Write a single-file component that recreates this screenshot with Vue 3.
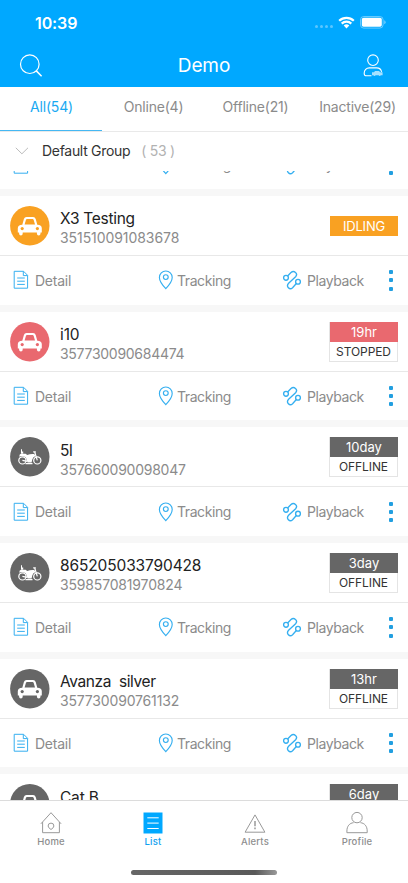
<script setup>
const tabs = [
  { label: 'All(54)', active: true },
  { label: 'Online(4)' },
  { label: 'Offline(21)' },
  { label: 'Inactive(29)' },
]

// nameGap / idGap: letter spacing in px for the two text lines
const vehicles = [
  { collapsed: true, id: 'previous' },
  { name: 'X3 Testing', id: '351510091083678', type: 'car', tone: 'orange', status: 'IDLING', nameGap: -0.3, idGap: -0.07 },
  { name: 'i10', id: '357730090684474', type: 'car', tone: 'red', status: 'STOPPED', time: '19hr', nameGap: -0.1, idGap: -0.28 },
  { name: '5l', id: '357660090098047', type: 'bike', tone: 'gray', status: 'OFFLINE', time: '10day', nameGap: -0.3, idGap: -0.25 },
  { name: '865205033790428', id: '359857081970824', type: 'bike', tone: 'gray', status: 'OFFLINE', time: '3day', nameGap: -0.13, idGap: -0.17 },
  { name: 'Avanza  silver', id: '357730090761132', type: 'car', tone: 'gray', status: 'OFFLINE', time: '13hr', nameGap: -0.4, idGap: -0.17 },
  { name: 'Cat B', id: '357730090761140', type: 'car', tone: 'gray', status: 'OFFLINE', time: '6day', nameGap: -0.2, idGap: -0.17 },
]
</script>

<template>
  <div class="screen">
    <header class="header">
      <div class="status-bar">
        <span class="clock">10:39</span>
        <div class="signals">
          <span class="dots"><i v-for="n in 4" :key="n"></i></span>
          <svg class="wifi" width="17" height="13" viewBox="0 0 17 13">
            <path d="M1.2 4.8a10.4 10.4 0 0 1 14.6 0M3.7 7.6a6.8 6.8 0 0 1 9.6 0" fill="none" stroke="#fff" stroke-width="2.2" />
            <path d="M8.5 12.4 5.7 9.6a4 4 0 0 1 5.6 0z" fill="#fff" />
          </svg>
          <svg class="battery" width="27" height="13" viewBox="0 0 27 13">
            <rect x=".5" y=".5" width="22.6" height="11.6" rx="3.3" fill="none" stroke="#fff" stroke-opacity=".4" />
            <rect x="1.8" y="1.8" width="20" height="9" rx="1.8" fill="#fff" />
            <path d="M24.3 4.3q1.3.6 1.3 2t-1.3 2z" fill="#fff" opacity=".5" />
          </svg>
        </div>
      </div>
      <div class="title-bar">
        <svg width="24" height="24" viewBox="0 0 24 24" fill="none" stroke="#fff" stroke-width="1.2">
          <circle cx="10.8" cy="10.2" r="9.3" />
          <path d="m17.3 16.9 5.3 5.3" stroke-width="1.5" />
        </svg>
        <h1>Demo</h1>
        <svg width="24" height="24" viewBox="0 0 24 24" fill="none" stroke="#fff" stroke-width="1.1">
          <circle cx="12" cy="6.2" r="5.3" />
          <path d="M10.5 21.8H5.6a2.4 2.4 0 0 1-2.4-2.4v-.5a5 5 0 0 1 5-5h7.5a5 5 0 0 1 4.9 4" />
          <path d="M11 18.2h2l1-1.2h4l1.2 1.2h2.4v3h-1.8a1.2 1.2 0 0 1-2.2 0h-3a1.2 1.2 0 0 1-2.2 0H11z" fill="#fff" fill-opacity=".65" stroke="none" />
        </svg>
      </div>
    </header>

    <nav class="tabs">
      <span v-for="t in tabs" :key="t.label" class="tab" :class="{ active: t.active }">{{ t.label }}</span>
    </nav>

    <div class="group">
      <svg width="14" height="8" viewBox="0 0 14 8"><path d="m.8.8 6.1 6L13 .8" fill="none" stroke="#bbb" /></svg>
      <span class="group-name">Default Group</span>
      <span class="group-count">( 53 )</span>
    </div>

    <main class="list">
      <article v-for="v in vehicles" :key="v.id" class="card" :class="{ collapsed: v.collapsed }">
        <div v-if="!v.collapsed" class="info">
          <svg class="avatar" :class="v.tone" width="40" height="40" viewBox="0 0 40 40">
            <circle cx="19.8" cy="19.8" r="19.7" fill="currentColor" />
            <template v-if="v.type === 'car'">
              <path d="M12.3 18.7 13.9 13q.7-2.1 2.6-2.1h6.6q1.9 0 2.6 2.1l1.6 5.7q4.5.3 4.5 3.5v4.2h-1.3v1.2q0 1.9-1.8 1.9t-1.8-1.9v-1.2H12.7v1.2q0 1.9-1.8 1.9t-1.8-1.9v-1.2H7.8v-4.2q0-3.2 4.5-3.5z" fill="#fff" />
              <path d="m14.6 18.4 1.3-4.4q.3-.9 1.1-.9h5.6q.8 0 1.1.9l1.3 4.4z" fill="currentColor" />
              <circle cx="12.2" cy="22.6" r="1.6" fill="currentColor" />
              <circle cx="27.4" cy="22.6" r="1.6" fill="currentColor" />
            </template>
            <template v-else>
              <g fill="none" stroke="#fff" stroke-width="1.2">
                <circle cx="12.4" cy="23.4" r="3.6" />
                <circle cx="27.3" cy="23.4" r="3.6" />
                <path d="m12.4 23.4 5 .9M23.2 14.8h2.6M24.7 15l2.6 8.4M15.5 26.6h7" />
              </g>
              <path d="M11 12.2h1v2.4h1.2v1.9H11zM11 16.8h4.6l1.6 1.2q3.6-1.5 7-1l1.3 2.1q-2.9 1-3.3 3.6l-.6 2.7h-4l-1.7-4.9q-1.8-1.8-4.5-1.6-1.2.1-2.2.8.2-2.8 1.8-2.9z" fill="#fff" />
            </template>
          </svg>
          <div class="labels">
            <span class="name" :style="{ letterSpacing: v.nameGap + 'px' }">{{ v.name }}</span>
            <span class="imei" :style="{ letterSpacing: v.idGap + 'px' }">{{ v.id }}</span>
          </div>
          <div class="badge" :class="[v.tone, { single: !v.time }]">
            <span class="badge-top">{{ v.time || v.status }}</span>
            <span v-if="v.time" class="badge-bottom">{{ v.status }}</span>
          </div>
        </div>
        <div v-if="v.name !== 'Cat B'" class="actions">
          <div class="action detail">
            <svg width="16" height="20" viewBox="0 0 16 20" fill="none" stroke="#35aff0">
              <path d="M1.2 1.3h9.4l4 4v12.9H1.2zM10.3 1.5v4.1h4.1" />
              <path d="M4.2 8h7.6M4.2 11.2h7.6M4.2 14.4h7.6" />
            </svg>
            <span>Detail</span>
          </div>
          <div class="action tracking">
            <svg width="16" height="20" viewBox="0 0 16 20" fill="none" stroke="#35aff0" stroke-width="1.15">
              <path d="M7.8 18.6Q1.4 11.8 1.4 7.4a6.4 6.4 0 0 1 12.8 0Q14.2 11.8 7.8 18.6z" />
              <circle cx="7.8" cy="7.1" r="2.4" />
            </svg>
            <span>Tracking</span>
          </div>
          <div class="action playback">
            <svg width="20" height="20" viewBox="0 0 20 20" fill="none" stroke="#35aff0" stroke-width="1.35">
              <circle cx="4" cy="7.8" r="2.4" />
              <circle cx="16" cy="11.7" r="2.4" />
              <path d="M5.6 6 9 2.6c3-2.7 7.4 1 4.6 4.2l-7 6.5c-2.9 3.2 1 7.2 4 4.4l3.7-4.2" />
            </svg>
            <span>Playback</span>
          </div>
          <div class="more"><i></i><i></i><i></i></div>
        </div>
      </article>
    </main>

    <footer class="bottom">
      <div class="nav">
        <div class="nav-item">
          <svg width="24" height="24" viewBox="0 0 24 24" fill="none" stroke="#999">
            <path d="M1.9 12.8 12 1.7l10.1 11.1M3.6 11v10.7h16.8V11" />
            <path d="M12 18.5q-2.9-1.8-2.9-3.5a2.9 2.9 0 0 1 5.8 0q0 1.7-2.9 3.5z" />
          </svg>
          <span>Home</span>
        </div>
        <div class="nav-item selected">
          <svg width="24" height="24" viewBox="0 0 24 24">
            <path d="M2.5 1.5h19v21h-19z" fill="#00a8ff" />
            <path d="M6.3 6.8h11.4M6.3 12.1h11.4M6.3 17.5h11.4" stroke="#fff" />
          </svg>
          <span>List</span>
        </div>
        <div class="nav-item">
          <svg width="24" height="24" viewBox="0 0 24 24" fill="none" stroke="#999">
            <path d="M12 3.9 21.9 21.2H2.1z" />
            <path d="M12 10v5.2M12 16.5v1.8" stroke-width="1.5" />
          </svg>
          <span>Alerts</span>
        </div>
        <div class="nav-item">
          <svg width="24" height="24" viewBox="0 0 24 24" fill="none" stroke="#999">
            <circle cx="12" cy="6.6" r="5.2" />
            <path d="M8.6 11.7C4.5 12 1.9 15.3 1.9 20v1.7h20.3V20c0-4.7-2.6-8-6.8-8.3" />
          </svg>
          <span>Profile</span>
        </div>
      </div>
      <div class="home-bar"></div>
    </footer>
  </div>
</template>

<style>
body { margin: 0; background: #fff; }
</style>

<style scoped>
* { box-sizing: border-box; }
svg { display: block; flex: none; }
.screen {
  width: 408px;
  height: 883px;
  display: flex;
  flex-direction: column;
  overflow: hidden;
  background: #fff;
  font-family: Inter, "Liberation Sans", sans-serif;
  color: #333;
}
.header { height: 87px; flex: none; background: #00a8ff; color: #fff; }
.status-bar { height: 44px; display: flex; justify-content: space-between; padding: 14px 21px 0 35px; }
.clock { font-size: 16px; line-height: 18px; font-weight: 600; letter-spacing: -.1px; }
.signals { display: flex; height: 17px; align-items: center; }
.dots { display: flex; gap: 2px; margin: 8px 5.5px 0 0; }
.dots i { width: 3px; height: 3px; border-radius: 50%; background: #5cc6ff; }
.battery { margin-left: 5px; }
.title-bar { height: 43px; display: flex; align-items: center; justify-content: space-between; padding: 0 23px 0 19px; }
h1 { margin: 0; font-size: 19px; line-height: 24px; font-weight: 400; letter-spacing: -.1px; padding-left: 4px; }
.tabs { height: 45px; flex: none; display: grid; grid-template-columns: repeat(4, 1fr); border-bottom: 1px solid #e9e9e9; }
.tab { height: 44px; padding: 0 0 5px 1px; display: flex; align-items: center; justify-content: center; font-size: 14px; letter-spacing: -.2px; color: #8b8b8b; white-space: nowrap; }
.tab.active { color: #19a9f2; border-bottom: 1px solid #45b8f3; padding-bottom: 4px; }
.group { height: 39px; flex: none; display: flex; align-items: center; padding: 0 0 2px 15px; font-size: 14px; letter-spacing: -.3px; }
.group-name { margin-left: 13px; }
.group-count { margin-left: 11px; color: #b2b2b2; letter-spacing: -.3px; }
.list { height: 629px; flex: none; overflow: hidden; background: #f7f7f7; }
.card { height: 108.7px; margin-bottom: 7px; background: #fff; }
.card.collapsed { height: 48.7px; margin-top: -30.7px; }
.info { height: 60px; display: flex; align-items: center; padding: 1px 10px 0; border-bottom: 1px solid #e8e8e8; }
.gray { color: #666; }
.orange { color: #f9a122; }
.red { color: #e9696f; }
.labels { display: flex; flex-direction: column; margin-left: 10px; padding-top: 4.4px; }
.name { font-size: 15.5px; line-height: 20px; color: #222; white-space: pre; }
.imei { font-size: 14px; line-height: 18px; color: #8b8b8b; }
.badge { width: 69px; height: 40px; margin-left: auto; text-align: center; border: 1px solid #e4e4e4; border-top: 0; }
.badge span { display: block; }
.badge-top { height: 20px; margin: 0 -1px 0 0; line-height: 20px; font-size: 13px; background: currentColor; }
.badge-top::first-line { color: #fff; }
.badge-bottom { height: 19px; line-height: 19px; font-size: 12px; letter-spacing: -.1px; color: #333; }
.badge.single { height: 20px; border: 0; }
.badge.single .badge-top { margin: 0 0 0 1px; letter-spacing: -.2px; }
.actions { height: 48.7px; display: flex; align-items: center; padding: 0 15px 0 13px; color: #8b8b8b; font-size: 14px; letter-spacing: -.42px; }
.action { display: flex; align-items: center; gap: 6px; }
.detail { width: 145px; letter-spacing: -.25px; }
.tracking { width: 124px; gap: 3px; }
.playback { gap: 5px; }
.more { display: flex; flex-direction: column; gap: 4.2px; margin-left: auto; }
.more i { width: 4px; height: 4px; border-radius: 1px; background: #229fe0; }
.bottom { height: 83px; flex: none; border-top: 1px solid #dcdcdc; background: #fff; }
.nav { height: 68px; display: grid; grid-template-columns: repeat(4, 1fr); }
.nav-item { display: flex; flex-direction: column; align-items: center; padding-top: 10px; font-size: 9.5px; line-height: 12px; font-weight: 500; letter-spacing: .2px; color: #8e8e8e; }
.nav-item span { margin-top: 1px; }
.selected { color: #119ff0; }
.home-bar { width: 146px; height: 5px; margin: 1px auto 0; border-radius: 3px; background: linear-gradient(90deg, #666, #595959 85%, #999); }
</style>
